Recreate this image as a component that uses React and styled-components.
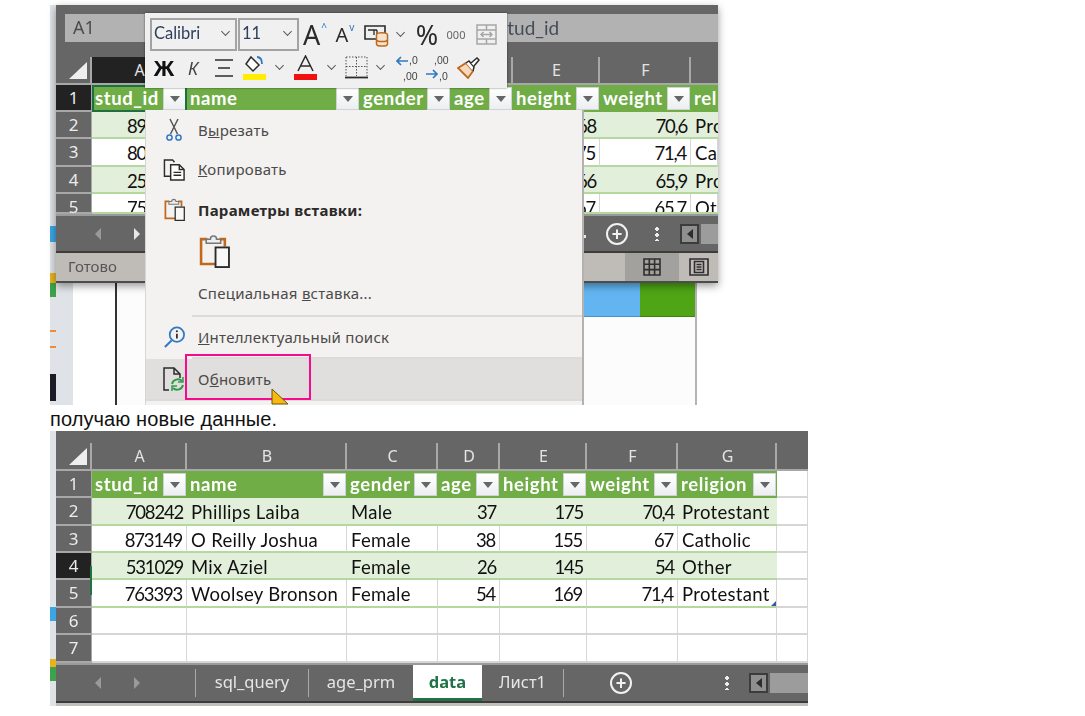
import React from "react";
import styled, { createGlobalStyle } from "styled-components";

const cellFont = `Lato, "Liberation Sans", sans-serif`;
const uiFont = `"Noto Sans", "Open Sans", sans-serif`;

const Global = createGlobalStyle`
  html, body { margin: 0; background: #fff; overflow: hidden; }
  #root { height: 716px; }
`;

const Page = styled.div`
  height: 716px;
  box-sizing: border-box;
  padding: 5px 0 0 50px;
  overflow: hidden;
`;

// first picture: the sheet with the context menu on top
const ShotOne = styled.div`
  position: relative;
  display: flex;
  width: 647px;
  height: 400px;
  filter: blur(0.4px);
`;
const EdgeStrip = styled.div`
  width: 6px;
  flex-shrink: 0;
  display: flex;
  flex-direction: column;
  background: #dfe3e7;
  overflow: hidden;
`;
const EdgeMark = styled.div`
  height: ${p => p.$h}px;
  margin-top: ${p => p.$top}px;
  background: ${p => p.$color};
  flex-shrink: 0;
`;
const MainColumn = styled.div`
  width: 641px;
  display: flex;
  flex-direction: column;
`;
const DocArea = styled.div`
  flex: 1;
  display: grid;
  grid-template-columns: 17px 42px 2px 466px 57px 55px 2px;
  background: #fcfcfc;
`;
const DocPart = styled.div`
  background: ${p => p.$bg};
`;
const DocTile = styled.div`
  height: 33px;
  background: ${p => p.$bg};
  border-bottom: 1px solid rgba(0, 0, 0, 0.2);
`;

// excel window
const Window = styled.div`
  position: relative;
  z-index: 1;
  width: ${p => p.$w}px;
  flex-shrink: 0;
  background: #666;
  box-shadow: ${p => (p.$shadow ? "0 3px 8px rgba(0,0,0,.4)" : "none")};
  overflow: hidden;
`;
const FormulaRow = styled.div`
  height: 52px;
  box-sizing: border-box;
  padding: 9px 0 15px 9px;
  display: flex;
  gap: 1px;
`;
const NameBox = styled.div`
  width: 414px;
  background: #b2b2b2;
  color: #4c4c4c;
  font: 18px/27px ${uiFont};
  padding-left: 8px;
  box-sizing: border-box;
`;
const FormulaBox = styled.div`
  flex: 1;
  background: #b2b2b2;
  color: #454c58;
  font: 19px/28px ${cellFont};
  padding-left: 19px;
`;
const TopGap = styled.div`
  height: 12px;
`;

const SheetGrid = styled.div`
  display: grid;
  grid-template-columns: ${p => p.$cols};
  grid-template-rows: ${p => p.$rows};
  overflow: hidden;
  font: 18.5px/29px ${cellFont};
`;
const Corner = styled.div`
  border-bottom: 2px solid #a8a8a8;
  border-right: 2px solid #a8a8a8;
  box-sizing: border-box;
  display: flex;
  justify-content: flex-end;
  align-items: flex-end;
  padding: 0 3px 4px 0;
  &::before {
    content: "";
    width: 18px;
    height: 17px;
    background: #eee;
    clip-path: polygon(100% 0, 100% 100%, 0 100%);
  }
`;
const ColHead = styled.div`
  box-sizing: border-box;
  padding-left: 2px;
  background: ${p => (p.$active ? "#222" : "#666")};
  color: #e4e4e4;
  text-align: center;
  font: 16px/27px ${uiFont};
  border-bottom: 2px solid #a8a8a8;
  border-right: ${p => (p.$open ? "none" : "2px solid #a8a8a8")};
`;
const RowHead = styled.div`
  position: relative;
  box-sizing: border-box;
  background: ${p => (p.$active ? "#222" : "#666")};
  color: #ececec;
  text-align: center;
  font: 17px/26px ${uiFont};
  border-bottom: 2px solid #a8a8a8;
  border-right: 1px solid #a8a8a8;
`;
const SelectEdge = styled.div`
  position: absolute;
  right: -1px;
  top: 13px;
  width: 2px;
  height: 29px;
  background: #217346;
  z-index: 2;
`;
const HeadCell = styled.div`
  position: relative;
  box-sizing: border-box;
  display: flex;
  justify-content: space-between;
  align-items: center;
  padding: 0 1px 0 3px;
  background: #70ad47;
  color: #fff;
  font-weight: 700;
  line-height: 27px;
  letter-spacing: 0.6px;
  white-space: nowrap;
  overflow: hidden;
  outline: ${p => (p.$selected ? "2px solid #1f6f43" : "none")};
  outline-offset: -2px;
`;
const FilterBtn = styled.span`
  width: 23px;
  height: 23px;
  flex-shrink: 0;
  box-sizing: border-box;
  background: linear-gradient(#fff, #eceef0);
  border: 1px solid #cfd2d6;
  display: flex;
  align-items: center;
  justify-content: center;
  &::before {
    content: "";
    border-left: 5px solid transparent;
    border-right: 5px solid transparent;
    border-top: 6px solid #666;
  }
`;
const Cell = styled.div`
  position: relative;
  box-sizing: border-box;
  padding: 0 ${p => (p.$right ? 4 : 2)}px 0 ${p => (p.$indent ? p.$indent : 4)}px;
  background: ${p => (p.$band ? "#e2efda" : "#fff")};
  color: #111;
  text-align: ${p => (p.$right ? "right" : "left")};
  letter-spacing: ${p => (p.$num ? "-1.2px" : "0.3px")};
  white-space: nowrap;
  overflow: hidden;
  border-bottom: 2px solid ${p => (p.$table ? "#b5d7a0" : "#d6d6d6")};
  border-right: ${p => (p.$band ? "none" : "1px solid #d6d6d6")};
`;
const TableHandle = styled.div`
  position: absolute;
  right: 0;
  bottom: 0;
  width: 5px;
  height: 5px;
  background: #3a55b0;
  clip-path: polygon(100% 0, 100% 100%, 0 100%);
`;

// sheet tabs
const TabBar = styled.div`
  height: ${p => p.$h}px;
  box-sizing: border-box;
  display: flex;
  align-items: center;
  background: #666;
  border-top: 2px solid #9a9a9a;
  border-bottom: 2px solid #3c3c3c;
`;
const Nav = styled.div`
  width: 139px;
  flex-shrink: 0;
  box-sizing: border-box;
  padding-left: 39px;
  display: flex;
  gap: 33px;
`;
const NavArrow = styled.span`
  border-top: 6px solid transparent;
  border-bottom: 6px solid transparent;
  ${p => (p.$next ? "border-left" : "border-right")}: 6px solid ${p => (p.$dim ? "#9a9a9a" : "#e8e8e8")};
`;
const TabSep = styled.span`
  width: 1px;
  height: 28px;
  background: #a8a8a8;
  flex-shrink: 0;
`;
const Tab = styled.div`
  align-self: stretch;
  width: ${p => p.$w}px;
  flex-shrink: 0;
  box-sizing: border-box;
  text-align: center;
  font: ${p => (p.$active ? 700 : 400)} 16.5px/33px ${uiFont};
  color: ${p => (p.$active ? "#217346" : "#e6e6e6")};
  background: ${p => (p.$active ? "#fff" : "transparent")};
  border-bottom: 3px solid ${p => (p.$active ? "#217346" : "transparent")};
`;
const TabSpacer = styled.div`
  flex: 1;
  display: flex;
  justify-content: flex-end;
  padding: 6px 20px 0 0;
  &::after {
    content: "";
    width: 3px;
    height: 3px;
    background: #e8e8e8;
  }
`;
const PlusBtn = styled.div`
  flex-shrink: 0;
  margin-left: ${p => p.$ml}px;
  width: 22px;
  height: 22px;
  box-sizing: border-box;
  border: 2px solid #f2f2f2;
  border-radius: 50%;
  color: #f2f2f2;
  display: flex;
  align-items: center;
  justify-content: center;
  font: 700 18px/18px "Liberation Sans", sans-serif;
`;
const Dots = styled.div`
  flex-shrink: 0;
  margin-left: ${p => p.$ml}px;
  width: 4px;
  height: 14px;
  background: radial-gradient(circle 2px at 2px 2px, #eee 98%, transparent) 0 0 / 4px 6px repeat-y;
`;
const ScrollBox = styled.div`
  flex-shrink: 0;
  margin-left: ${p => p.$ml}px;
  width: ${p => p.$w}px;
  height: 20px;
  display: flex;
  gap: 2px;
`;
const ScrollLeft = styled.div`
  width: 19px;
  box-sizing: border-box;
  background: #8f8f8f;
  border: 2px solid #3c3c3c;
  display: flex;
  align-items: center;
  justify-content: center;
  &::before {
    content: "";
    border-top: 5px solid transparent;
    border-bottom: 5px solid transparent;
    border-right: 6px solid #2c2c2c;
  }
`;
const ScrollThumb = styled.div`
  flex: 1;
  background: #9c9c9c;
`;
const FootLine = styled.div`
  height: 3px;
  background: #c2bfbb;
`;

const StatusBar = styled.div`
  height: 30px;
  box-sizing: border-box;
  display: flex;
  background: #bfbbb7;
  border-bottom: 2px solid #4c4c4c;
  color: #555;
  font: 15px/27px ${uiFont};
  padding-left: 12px;
`;
const StatusText = styled.div`
  flex: 1;
`;
const ViewBtn = styled.div`
  width: ${p => p.$w}px;
  display: flex;
  align-items: center;
  justify-content: center;
  background: ${p => (p.$on ? "#a3a19e" : "transparent")};
`;

// floating mini toolbar
const MiniToolbar = styled.div`
  position: absolute;
  z-index: 3;
  left: 95px;
  top: 8px;
  width: 362px;
  height: 75px;
  box-sizing: border-box;
  padding: 5px 0 0 5px;
  display: flex;
  flex-direction: column;
  background: #f0f0f0;
  box-shadow: 0 0 2px rgba(0, 0, 0, 0.55);
`;
const ToolRow = styled.div`
  display: flex;
  align-items: center;
  height: ${p => p.$h}px;
`;
const SelectBox = styled.div`
  width: ${p => p.$w}px;
  height: 33px;
  box-sizing: border-box;
  border: 2px solid #a3a3a3;
  margin-right: 1px;
  padding: 0 6px 3px 2px;
  display: flex;
  align-items: center;
  justify-content: space-between;
  font: 16.5px/26px ${cellFont};
  color: #2f3f5c;
`;
const Tool = styled.div`
  width: ${p => p.$w}px;
  height: 100%;
  flex-shrink: 0;
  display: flex;
  align-items: center;
  justify-content: center;
  color: ${p => p.$color || "#2b2b2b"};
  font-family: ${uiFont};
  font-size: ${p => p.$size || 16}px;
  font-weight: ${p => p.$weight || 400};
  font-style: ${p => (p.$italic ? "italic" : "normal")};
`;
const ToolMark = styled.sup`
  font-size: 10px;
  color: #2f78c4;
  align-self: flex-start;
  margin: 4px 0 0 1px;
  line-height: 10px;
`;
const Caret = styled.span`
  width: 6px;
  height: 6px;
  border-right: 1.5px solid #555;
  border-bottom: 1.5px solid #555;
  transform: translateY(-2px) rotate(45deg) scale(0.9);
`;

// context menu
const ContextMenu = styled.div`
  position: absolute;
  z-index: 2;
  left: 95px;
  top: 105px;
  width: 439px;
  height: 295px;
  box-sizing: border-box;
  overflow: hidden;
  background: #f3f2f1;
  border-left: 1px solid #d6d6d6;
  border-right: 2px solid #b4b2b0;
  font: 15px/20px ${uiFont};
  letter-spacing: 0.25px;
  color: #4c4a48;
`;
const MenuItem = styled.div`
  height: ${p => p.$h}px;
  display: flex;
  align-items: center;
  background: ${p => (p.$hover ? "#e0dfdd" : "transparent")};
  font-weight: ${p => (p.$bold ? 700 : 400)};
  color: ${p => (p.$bold ? "#2c2a28" : "#4c4a48")};
`;
const MenuIcon = styled.div`
  width: 52px;
  flex-shrink: 0;
  display: flex;
  justify-content: center;
  padding-left: 4px;
  box-sizing: border-box;
`;
const MenuLabel = styled.span`
  white-space: nowrap;
`;
const MenuSep = styled.div`
  height: 2px;
  margin-left: ${p => p.$ml}px;
  background: #dcdbd9;
`;
const PasteRow = styled.div`
  height: 40px;
  padding-left: 53px;
  display: flex;
  align-items: center;
`;
const PinkFrame = styled.div`
  position: absolute;
  z-index: 4;
  left: 135px;
  top: 349px;
  width: 126px;
  height: 46px;
  box-sizing: border-box;
  border: 2.5px solid #f70a8d;
`;
const Pointer = styled.svg`
  position: absolute;
  z-index: 5;
  left: 221px;
  top: 384px;
`;

const Caption = styled.div`
  height: 26px;
  font: 20px/28px "Liberation Sans", Arial, sans-serif;
  letter-spacing: 0.1px;
  color: #111;
`;

// second picture: the refreshed table
const ShotTwo = styled.div`
  display: flex;
  width: 758px;
  height: 275px;
  filter: blur(0.4px);
`;

function Scissors() {
  return (
    <svg width="18" height="24" viewBox="0 0 18 24" fill="none">
      <path d="M5 1l7.5 15M13 1L5.500 16" stroke="#555" strokeWidth="1.5" />
      <circle cx="4.500" cy="19.500" r="2.600" stroke="#2f78c4" strokeWidth="1.500" />
      <circle cx="13.500" cy="19.500" r="2.600" stroke="#2f78c4" strokeWidth="1.500" />
    </svg>
  );
}
function CopyIcon() {
  return (
    <svg width="23" height="23" viewBox="0 0 24 24" fill="none" stroke="#2b2b2b" strokeWidth="1.500">
      <path d="M8 19H1.500V2h8.500l2 2.500" />
      <path d="M8 7h9l5 5v11H8z" fill="#fff" />
      <path d="M17 7v5h5M11 15h8M11 18h8" />
    </svg>
  );
}
function PasteIcon({ size }) {
  return (
    <svg width={size} height={size * 1.1} viewBox="0 0 30 33" fill="none">
      <path d="M8 5H2v24h14" stroke="#c0691c" strokeWidth="2.500" />
      <path d="M20 5h5v7" stroke="#c0691c" strokeWidth="2.500" />
      <path d="M7 9V5h4c0-4 6-4 6 0h4v4z" fill="#eee" stroke="#777" strokeWidth="1.500" />
      <rect x="16" y="13" width="13" height="19" fill="#f8f8f8" stroke="#2b2b2b" strokeWidth="1.800" />
    </svg>
  );
}
function SearchIcon() {
  return (
    <svg width="23" height="23" viewBox="0 0 24 24" fill="none">
      <circle cx="14.500" cy="9" r="7.500" stroke="#2f78c4" strokeWidth="1.800" />
      <path d="M9 15l-7 7" stroke="#2f78c4" strokeWidth="2.200" />
      <path d="M14.500 8v5" stroke="#2b2b2b" strokeWidth="1.800" />
      <circle cx="14.500" cy="5.500" r="1.100" fill="#2b2b2b" />
    </svg>
  );
}
function RefreshDoc() {
  return (
    <svg width="24" height="26" viewBox="0 0 24 26" fill="none">
      <path d="M7 24H2V2h10l6 6v4" stroke="#2b2b2b" strokeWidth="1.500" />
      <path d="M12 2v6h6" stroke="#2b2b2b" strokeWidth="1.500" />
      <path d="M10 18a6 6 0 0 1 10-3M21 19a6 6 0 0 1-10 3" stroke="#2e9a4a" strokeWidth="2" />
      <path d="M21 11v5h-5M10 25v-5h5" stroke="#2e9a4a" strokeWidth="1.500" />
    </svg>
  );
}
function GridIcon() {
  return (
    <svg width="18" height="18" viewBox="0 0 18 18" fill="none" stroke="#2f2f2f" strokeWidth="1.600">
      <path d="M1 1h16v16H1zM6.300 1v16M11.600 1v16M1 6.300h16M1 11.600h16" />
    </svg>
  );
}
function PageIcon() {
  return (
    <svg width="20" height="18" viewBox="0 0 20 18" fill="none" stroke="#2f2f2f" strokeWidth="1.600">
      <path d="M1 1h18v16H1zM5.500 3.500h9v11h-9zM7.500 6.500h5M7.500 9h5M7.500 11.500h5" />
    </svg>
  );
}
function TableDb() {
  return (
    <svg width="25" height="24" viewBox="0 0 25 24" fill="none">
      <path d="M1 3h20v13H1z" stroke="#2b2b2b" strokeWidth="1.600" />
      <path d="M4 7h6v5M8 7h5M13 7v5h4" stroke="#2b2b2b" strokeWidth="1.300" />
      <ellipse cx="18" cy="12" rx="5.500" ry="2.200" fill="#f4e3d0" stroke="#c0691c" strokeWidth="1.500" />
      <path d="M12.500 12v9c0 2.800 11 2.800 11 0v-9M12.500 16.500c0 2.800 11 2.800 11 0" fill="#f4e3d0" stroke="#c0691c" strokeWidth="1.500" />
    </svg>
  );
}
function MergeIcon() {
  return (
    <svg width="21" height="21" viewBox="0 0 21 21" fill="none" stroke="#a6a6a6" strokeWidth="1.500">
      <path d="M1 1h19v19H1zM1 6h19M1 15h19M10.500 1v5M10.500 15v5" />
      <path d="M5 10.500h11M7.500 8l-2.500 2.500L7.500 13M13.500 8l2.500 2.500-2.500 2.500" />
    </svg>
  );
}
function AlignIcon() {
  return (
    <svg width="20" height="20" viewBox="0 0 20 20" stroke="#2b2b2b" strokeWidth="1.700">
      <path d="M1 2h18M4 10h12M1 18h18" />
    </svg>
  );
}
function FillIcon() {
  return (
    <svg width="23" height="25" viewBox="0 0 23 25" fill="none">
      <path d="M8 2l8 8-6 6-7-7z" fill="#fff" stroke="#2b2b2b" strokeWidth="1.500" />
      <path d="M14 2c4 0 5 4 5 7" stroke="#2f78c4" strokeWidth="1.800" />
      <rect y="19" width="23" height="6" fill="#ffee00" />
    </svg>
  );
}
function FontColor() {
  return (
    <svg width="23" height="25" viewBox="0 0 23 25" fill="none">
      <path d="M4 16L11.500 1 19 16M7 11h9" stroke="#2b2b2b" strokeWidth="1.500" />
      <rect y="19" width="23" height="6" fill="#f01010" />
    </svg>
  );
}
function BordersIcon() {
  return (
    <svg width="23" height="23" viewBox="0 0 23 23" fill="none" stroke="#555">
      <path d="M1 1h21M1 1v19M22 1v19M11.500 1v19M1 10.500h21" strokeDasharray="1.500 1.500" />
      <path d="M0 21.500h23" stroke="#2b2b2b" strokeWidth="1.800" />
    </svg>
  );
}
function DecimalIcon({ more }) {
  const digit = { fontFamily: '"Liberation Sans", sans-serif', fontSize: 10.5, fill: "#444" };
  return (
    <svg width="24" height="28" viewBox="0 0 24 28" fill="none">
      <text x={more ? 8 : 13} y="10" style={digit}>{more ? ",00" : ",0"}</text>
      <text x={more ? 13 : 7} y="26" style={digit}>{more ? ",0" : ",00"}</text>
      {more ? (
        <path d="M0 20h11M7 16l4 4-4 4" stroke="#2f78c4" strokeWidth="1.700" />
      ) : (
        <path d="M12 7H1M5 3L1 7l4 4" stroke="#2f78c4" strokeWidth="1.700" />
      )}
    </svg>
  );
}
function BrushIcon() {
  return (
    <svg width="23" height="22" viewBox="0 0 23 22" fill="none">
      <path d="M1 11l8-5 7 8-5 7z" fill="#f3d9bd" stroke="#c0691c" strokeWidth="1.800" />
      <path d="M9 6l3-2 5 6-1 4" fill="#fff" stroke="#2b2b2b" strokeWidth="1.500" />
      <path d="M14 6l6-5 2 2-5 6" fill="#fff" stroke="#2b2b2b" strokeWidth="1.500" />
    </svg>
  );
}

const hdrTwo = ["stud_id", "name", "gender", "age", "height", "weight", "religion"];
const colsTwo = "36px 95px 160px 91px 62px 87px 91px 99px 31px";
const rowsTwo = "28px 27px 28px 27px 27px 28px 27px 28px";
const dataTwo = [
  ["708242", "Phillips Laiba", "Male", "37", "175", "70,4", "Protestant"],
  ["873149", "O Reilly Joshua", "Female", "38", "155", "67", "Catholic"],
  ["531029", "Mix Aziel", "Female", "26", "145", "54", "Other"],
  ["763393", "Woolsey Bronson", "Female", "54", "169", "71,4", "Protestant"],
];
const colsOne = "36px 95px 173px 91px 62px 87px 91px 27px";
const rowsOne = "28px 27px 27px 28px 27px 20px";
// only what the menu leaves visible in the first picture
const dataOne = [
  ["89", "", "", "", "168", "70,6", "Protestant"],
  ["80", "", "", "", "175", "71,4", "Catholic"],
  ["25", "", "", "", "166", "65,9", "Protestant"],
  ["75", "", "", "", "167", "65,7", "Other"],
];
const letters = ["A", "B", "C", "D", "E", "F", "G"];
const rightCols = [0, 3, 4, 5];

function DataRow({ num, row, band, activeHead, indentFirst, tail, handle, selectEdge }) {
  return (
    <>
      <RowHead $active={activeHead}>
        {num}
        {selectEdge && <SelectEdge />}
      </RowHead>
      {row.map((v, i) => {
        const right = rightCols.includes(i);
        const indent = indentFirst && i === 0;
        return (
          <Cell key={i} $band={band} $table $num={right} $right={right && !indent} $indent={indent ? 35 : 0}>
            {v}
            {handle && i === 6 && <TableHandle />}
          </Cell>
        );
      })}
      {tail && <Cell />}
    </>
  );
}

function SheetOne() {
  return (
    <SheetGrid $cols={colsOne} $rows={rowsOne}>
      <Corner />
      {letters.map((l, i) => (
        <ColHead key={l} $active={i === 0} $open={i === 6}>{i === 6 ? "" : l}</ColHead>
      ))}
      <RowHead $active>1</RowHead>
      {hdrTwo.map((h, i) => (
        <HeadCell key={h} $selected={i === 0}>
          {i === 6 ? "rel" : h}
          {i !== 6 && <FilterBtn />}
        </HeadCell>
      ))}
      {dataOne.map((r, i) => (
        <DataRow key={i} num={i + 2} row={r} band={i % 2 === 0} indentFirst />
      ))}
    </SheetGrid>
  );
}

function SheetTwo() {
  return (
    <SheetGrid $cols={colsTwo} $rows={rowsTwo}>
      <Corner />
      {letters.map(l => <ColHead key={l}>{l}</ColHead>)}
      <ColHead $open />
      <RowHead>1</RowHead>
      {hdrTwo.map(h => (
        <HeadCell key={h}>
          {h}
          <FilterBtn />
        </HeadCell>
      ))}
      <Cell />
      {dataTwo.map((r, i) => (
        <DataRow
          key={i}
          num={i + 2}
          row={r}
          band={i % 2 === 0}
          activeHead={i === 2}
          selectEdge={i === 2}
          handle={i === 3}
          tail
        />
      ))}
      {[6, 7].map(n => (
        <React.Fragment key={n}>
          <RowHead>{n}</RowHead>
          {[...letters, ""].map((l, i) => <Cell key={i} />)}
        </React.Fragment>
      ))}
    </SheetGrid>
  );
}

function Toolbar() {
  return (
    <MiniToolbar>
      <ToolRow $h={33}>
        <SelectBox $w={87}>Calibri<Caret /></SelectBox>
        <SelectBox $w={61}>11<Caret /></SelectBox>
        <Tool $w={30} $size={27}>A<ToolMark>^</ToolMark></Tool>
        <Tool $w={30} $size={20}>A<ToolMark>v</ToolMark></Tool>
        <Tool $w={32}><TableDb /></Tool>
        <Tool $w={16}><Caret /></Tool>
        <Tool $w={38} $size={27}>%</Tool>
        <Tool $w={20} $size={11} $color="#666">000</Tool>
        <Tool $w={40}><MergeIcon /></Tool>
      </ToolRow>
      <ToolRow $h={33}>
        <Tool $w={28} $size={21} $weight={700} $color="#111">Ж</Tool>
        <Tool $w={30} $size={18} $italic $color="#444">К</Tool>
        <Tool $w={32}><AlignIcon /></Tool>
        <Tool $w={28}><FillIcon /></Tool>
        <Tool $w={22}><Caret /></Tool>
        <Tool $w={30}><FontColor /></Tool>
        <Tool $w={22}><Caret /></Tool>
        <Tool $w={28}><BordersIcon /></Tool>
        <Tool $w={20}><Caret /></Tool>
        <Tool $w={36}><DecimalIcon /></Tool>
        <Tool $w={24}><DecimalIcon more /></Tool>
        <Tool $w={36}><BrushIcon /></Tool>
      </ToolRow>
    </MiniToolbar>
  );
}

function Menu() {
  return (
    <ContextMenu>
      <MenuItem $h={40}><MenuIcon><Scissors /></MenuIcon><MenuLabel>В<u>ы</u>резать</MenuLabel></MenuItem>
      <MenuItem $h={38}><MenuIcon><CopyIcon /></MenuIcon><MenuLabel><u>К</u>опировать</MenuLabel></MenuItem>
      <MenuItem $h={43} $bold><MenuIcon><PasteIcon size={21} /></MenuIcon><MenuLabel>Параметры вставки:</MenuLabel></MenuItem>
      <PasteRow><PasteIcon size={31} /></PasteRow>
      <MenuItem $h={44}><MenuIcon /><MenuLabel>Специальная <u>в</u>ставка...</MenuLabel></MenuItem>
      <MenuSep $ml={46} />
      <MenuItem $h={40}><MenuIcon><SearchIcon /></MenuIcon><MenuLabel><u>И</u>нтеллектуальный поиск</MenuLabel></MenuItem>
      <MenuSep $ml={46} />
      <MenuItem $h={40} $hover><MenuIcon><RefreshDoc /></MenuIcon><MenuLabel>О<u>б</u>новить</MenuLabel></MenuItem>
      <MenuSep $ml={0} />
    </ContextMenu>
  );
}

export default function App() {
  return (
    <Page>
      <Global />
      <ShotOne>
        <EdgeStrip>
          <EdgeMark $top={221} $h={16} $color="#3aa6e6" />
          <EdgeMark $top={31} $h={10} $color="#e6b21e" />
          <EdgeMark $top={0} $h={14} $color="#3da24a" />
          <EdgeMark $top={33} $h={2} $color="#f28a3c" />
          <EdgeMark $top={14} $h={2} $color="#f28a3c" />
          <EdgeMark $top={26} $h={27} $color="#1c1c26" />
        </EdgeStrip>
        <MainColumn>
          <Window $w={662} $shadow>
            <FormulaRow>
              <NameBox>A1</NameBox>
              <FormulaBox>stud_id</FormulaBox>
            </FormulaRow>
            <SheetOne />
            <TabBar $h={39}>
              <Nav>
                <NavArrow $dim />
                <NavArrow $next />
              </Nav>
              <TabSpacer />
              <PlusBtn $ml={0}>+</PlusBtn>
              <Dots $ml={27} />
              <ScrollBox $ml={21} $w={38}>
                <ScrollLeft />
                <ScrollThumb />
              </ScrollBox>
            </TabBar>
            <StatusBar>
              <StatusText>Готово</StatusText>
              <ViewBtn $w={54} $on><GridIcon /></ViewBtn>
              <ViewBtn $w={39}><PageIcon /></ViewBtn>
            </StatusBar>
          </Window>
          <DocArea>
            <DocPart $bg="#dfe3e7" />
            <DocPart $bg="#fff" />
            <DocPart $bg="#333" />
            <DocPart $bg="#fcfcfc" />
            <DocPart $bg="#fcfcfc"><DocTile $bg="#62b5f1" /></DocPart>
            <DocPart $bg="#fcfcfc"><DocTile $bg="#4fa516" /></DocPart>
            <DocPart $bg="#b4b4b4" />
          </DocArea>
        </MainColumn>
        <Toolbar />
        <Menu />
        <PinkFrame />
        <Pointer width="18" height="16" viewBox="0 0 18 16">
          <path d="M1 0l16 15H1z" fill="#f5b90f" stroke="#6b5410" strokeWidth="1" />
        </Pointer>
      </ShotOne>
      <Caption>получаю новые данные.</Caption>
      <ShotTwo>
        <EdgeStrip>
          <EdgeMark $top={176} $h={14} $color="#3aa6e6" />
          <EdgeMark $top={38} $h={8} $color="#e6b21e" />
          <EdgeMark $top={0} $h={14} $color="#3da24a" />
        </EdgeStrip>
        <Window $w={752}>
          <TopGap />
          <SheetTwo />
          <TabBar $h={40}>
            <Nav>
              <NavArrow $dim />
              <NavArrow $next $dim />
            </Nav>
            <TabSep />
            <Tab $w={112}>sql_query</Tab>
            <TabSep />
            <Tab $w={104}>age_prm</Tab>
            <Tab $w={69} $active>data</Tab>
            <Tab $w={81}>Лист1</Tab>
            <TabSep />
            <PlusBtn $ml={46}>+</PlusBtn>
            <Dots $ml={93} />
            <ScrollBox $ml={20} $w={59}>
              <ScrollLeft />
              <ScrollThumb />
            </ScrollBox>
          </TabBar>
          <FootLine />
        </Window>
      </ShotTwo>
    </Page>
  );
}
